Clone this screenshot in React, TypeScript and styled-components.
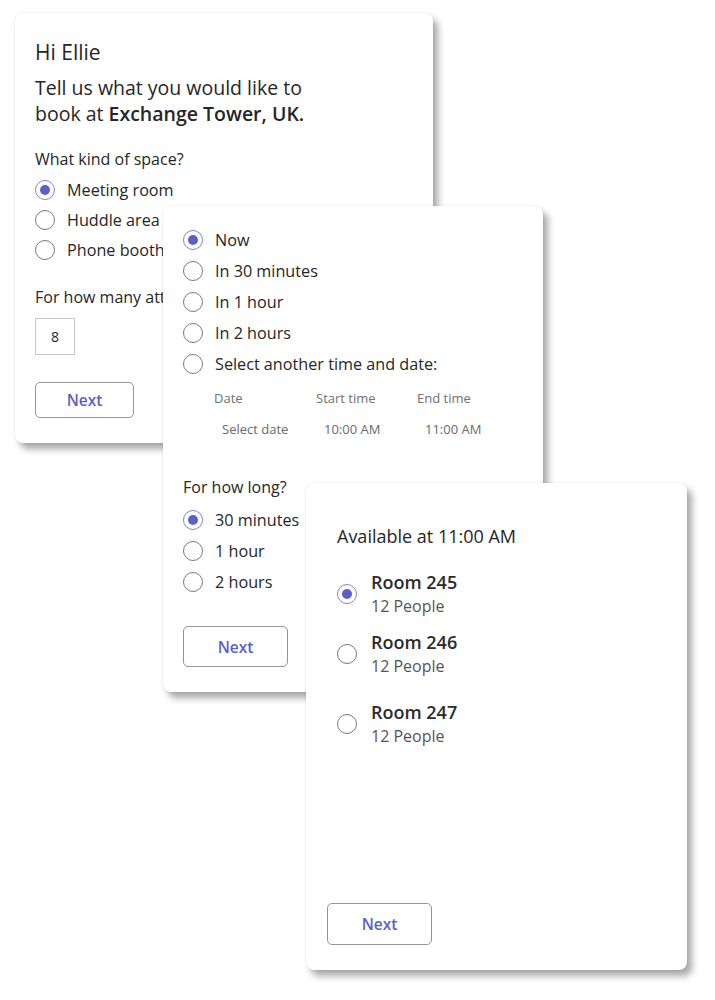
import React from "react";
import styled, { createGlobalStyle } from "styled-components";

const Global = createGlobalStyle`
  html, body { margin: 0; padding: 0; background: #ffffff; }
  body { font-family: "Open Sans", "Noto Sans", sans-serif; color: #262626; }
  * { box-sizing: border-box; }
`;

const Canvas = styled.div`
  position: relative;
  width: 715px;
  height: 1000px;
  overflow: hidden;
  background: #ffffff;
`;

const Card = styled.section<{ $x: number; $y: number; $w: number; $h: number; $pad: string }>`
  position: absolute;
  left: ${(p) => p.$x}px;
  top: ${(p) => p.$y}px;
  width: ${(p) => p.$w}px;
  height: ${(p) => p.$h}px;
  padding: ${(p) => p.$pad};
  background: #ffffff;
  border-radius: 8px;
  box-shadow: 0 0 2px rgba(0, 0, 0, 0.12), 5px 6px 7px rgba(0, 0, 0, 0.34);
  display: flex;
  flex-direction: column;
  align-items: flex-start;
`;

const Greeting = styled.h1`
  margin: 0;
  font-size: 21px;
  line-height: 28px;
  font-weight: 400;
`;

const Intro = styled.p`
  margin: 9px 0 0;
  font-size: 19.5px;
  line-height: 26px;
  font-weight: 400;
  b { font-weight: 600; }
`;

const Question = styled.div<{ $mt: number }>`
  margin-top: ${(p) => p.$mt}px;
  font-size: 16px;
  line-height: 22px;
`;

const RadioList = styled.div<{ $mt: number; $row: number }>`
  margin-top: ${(p) => p.$mt}px;
  display: grid;
  grid-auto-rows: ${(p) => p.$row}px;
`;

const RadioRow = styled.label`
  display: flex;
  align-items: center;
  gap: 12px;
  font-size: 16.2px;
  white-space: nowrap;
`;

const Circle = styled.span<{ $on?: boolean }>`
  flex: none;
  width: 20px;
  height: 20px;
  border-radius: 50%;
  border: 1.5px solid ${(p) => (p.$on ? "#7f82d9" : "#7a7a7a")};
  display: flex;
  align-items: center;
  justify-content: center;
  &::after {
    content: "";
    width: 10px;
    height: 10px;
    border-radius: 50%;
    background: ${(p) => (p.$on ? "#5b5fc7" : "transparent")};
  }
`;

const NumberBox = styled.div`
  margin-top: 10px;
  width: 40px;
  height: 39px;
  border: 1px solid #c8c8c8;
  display: flex;
  align-items: center;
  justify-content: center;
  font-size: 14px;
`;

const NextButton = styled.button<{ $mt?: string; $w: number; $h: number }>`
  margin-top: ${(p) => p.$mt ?? "0"};
  width: ${(p) => p.$w}px;
  height: ${(p) => p.$h}px;
  border: 1.5px solid #959595;
  border-radius: 5px;
  background: #ffffff;
  color: #5b5fc7;
  font-family: inherit;
  font-size: 15.5px;
  font-weight: 600;
  padding: 0;
`;

const DateGrid = styled.div`
  margin: 10px 0 0 31px;
  display: grid;
  grid-template-columns: 102px 101px 100px;
  grid-auto-rows: 18px;
  row-gap: 13px;
  font-size: 13px;
  line-height: 18px;
  color: #707070;
`;

const DateValue = styled.span`
  padding-left: 8px;
  color: #6a6a6a;
`;

const Available = styled.div`
  margin: 0 0 0 10px;
  font-size: 18px;
  line-height: 24px;
`;

const RoomList = styled.div`
  margin: 23px 0 0 10px;
  display: flex;
  flex-direction: column;
`;

const RoomRow = styled.label<{ $mt: number }>`
  margin-top: ${(p) => p.$mt}px;
  display: flex;
  align-items: center;
  gap: 14px;
`;

const RoomText = styled.div`
  display: flex;
  flex-direction: column;
`;

const RoomName = styled.span`
  font-size: 18px;
  line-height: 22px;
  font-weight: 600;
  color: #2b2b2b;
`;

const RoomPeople = styled.span`
  margin-top: 2px;
  font-size: 16px;
  line-height: 22px;
  color: #555555;
`;

const Spacer = styled.div`
  flex: 1;
`;

function Radio({ label, on }: { label: string; on?: boolean }) {
  return (
    <RadioRow>
      <Circle $on={on} />
      {label}
    </RadioRow>
  );
}

const rooms = [
  { name: "Room 245", on: true, mt: 0 },
  { name: "Room 246", on: false, mt: 14 },
  { name: "Room 247", on: false, mt: 24 },
];

export default function App() {
  return (
    <Canvas>
      <Global />
      <Card $x={15} $y={13} $w={418} $h={430} $pad="25px 20px">
        <Greeting>Hi Ellie</Greeting>
        <Intro>
          Tell us what you would like to
          <br />
          book at <b>Exchange Tower, UK.</b>
        </Intro>
        <Question $mt={21}>What kind of space?</Question>
        <RadioList $mt={5} $row={30}>
          <Radio label="Meeting room" on />
          <Radio label="Huddle area" />
          <Radio label="Phone booth" />
        </RadioList>
        <Question $mt={21}>For how many attendees?</Question>
        <NumberBox>8</NumberBox>
        <NextButton $mt="27px" $w={99} $h={39}>Next</NextButton>
      </Card>

      <Card $x={163} $y={206} $w={380} $h={486} $pad="18px 20px">
        <RadioList $mt={0} $row={31}>
          <Radio label="Now" on />
          <Radio label="In 30 minutes" />
          <Radio label="In 1 hour" />
          <Radio label="In 2 hours" />
          <Radio label="Select another time and date:" />
        </RadioList>
        <DateGrid>
          <span>Date</span>
          <span>Start time</span>
          <span>End time</span>
          <DateValue>Select date</DateValue>
          <DateValue>10:00 AM</DateValue>
          <DateValue>11:00 AM</DateValue>
        </DateGrid>
        <Question $mt={38}>For how long?</Question>
        <RadioList $mt={6} $row={31}>
          <Radio label="30 minutes" on />
          <Radio label="1 hour" />
          <Radio label="2 hours" />
        </RadioList>
        <NextButton $mt="29px" $w={105} $h={41}>Next</NextButton>
      </Card>

      <Card $x={306} $y={483} $w={381} $h={487} $pad="41px 21px 25px">
        <Available>Available at 11:00 AM</Available>
        <RoomList>
          {rooms.map((r) => (
            <RoomRow key={r.name} $mt={r.mt}>
              <Circle $on={r.on} />
              <RoomText>
                <RoomName>{r.name}</RoomName>
                <RoomPeople>12 People</RoomPeople>
              </RoomText>
            </RoomRow>
          ))}
        </RoomList>
        <Spacer />
        <NextButton $w={105} $h={42}>Next</NextButton>
      </Card>
    </Canvas>
  );
}
